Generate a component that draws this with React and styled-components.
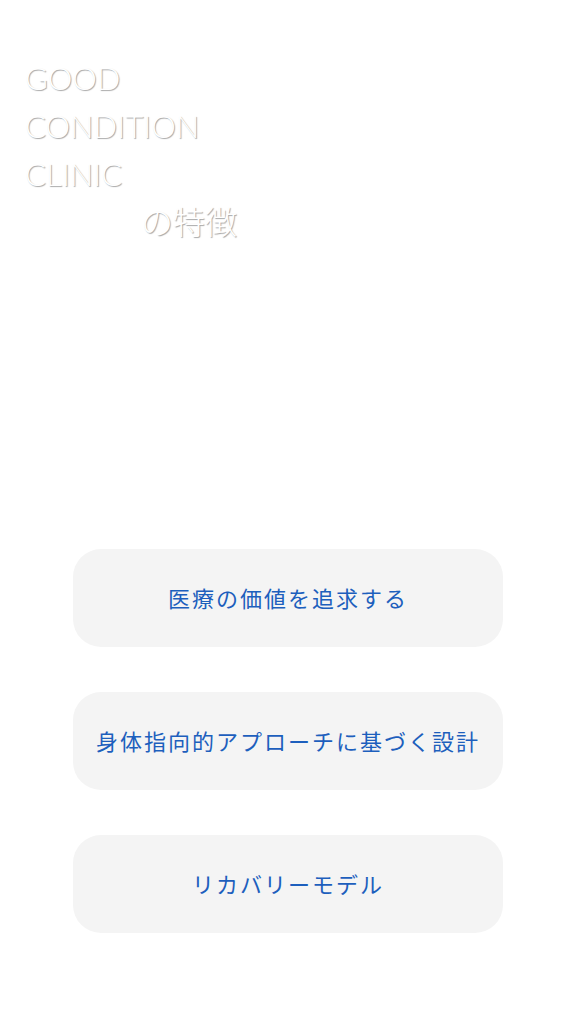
import styled, { createGlobalStyle } from "styled-components";

const GlobalStyle = createGlobalStyle`
  html, body {
    margin: 0;
    padding: 0;
    background: #ffffff;
  }
`

const features = [
    "医療の価値を追求する",
    "身体指向的アプローチに基づく設計",
    "リカバリーモデル",
];

function App() {
    return (
        <Page>
            <GlobalStyle />
            <Heading>
                <Line>GOOD</Line>
                <Line>CONDITION</Line>
                <Line>CLINIC</Line>
                <Line indent>の特徴</Line>
            </Heading>
            <List>
                {features.map((f) => (
                    <Card key={f}>{f}</Card>
                ))}
            </List>
        </Page>
    )
}

const Page = styled.div`
  width: 576px;
  min-height: 1024px;
  box-sizing: border-box;
  padding-top: 54px;
  display: flex;
  flex-direction: column;
`

const Heading = styled.h1`
  margin: 0;
  padding-left: 25px;
  font-family: Lato, "Noto Sans CJK JP", sans-serif;
  font-weight: 300;
  font-size: 31px;
  line-height: 48px;
  color: #ffffff;
  text-shadow: 1px 1px 1px rgba(0, 0, 0, 0.35);
`

const Line = styled.div`
  padding-left: ${(p) => (p.indent ? "116px" : "0")};
  font-size: ${(p) => (p.indent ? "32px" : "inherit")};
`

const List = styled.div`
  margin-top: 303px;
  display: flex;
  flex-direction: column;
  align-items: center;
  gap: 45px;
`

const Card = styled.div`
  width: 430px;
  height: 98px;
  box-sizing: border-box;
  padding-bottom: 3px;
  border-radius: 28px;
  background: #f4f4f4;
  display: flex;
  align-items: center;
  justify-content: center;
  font-family: "Noto Sans CJK JP", sans-serif;
  font-size: 22px;
  letter-spacing: 2px;
  color: #1d5fbd;
`

export default App;
